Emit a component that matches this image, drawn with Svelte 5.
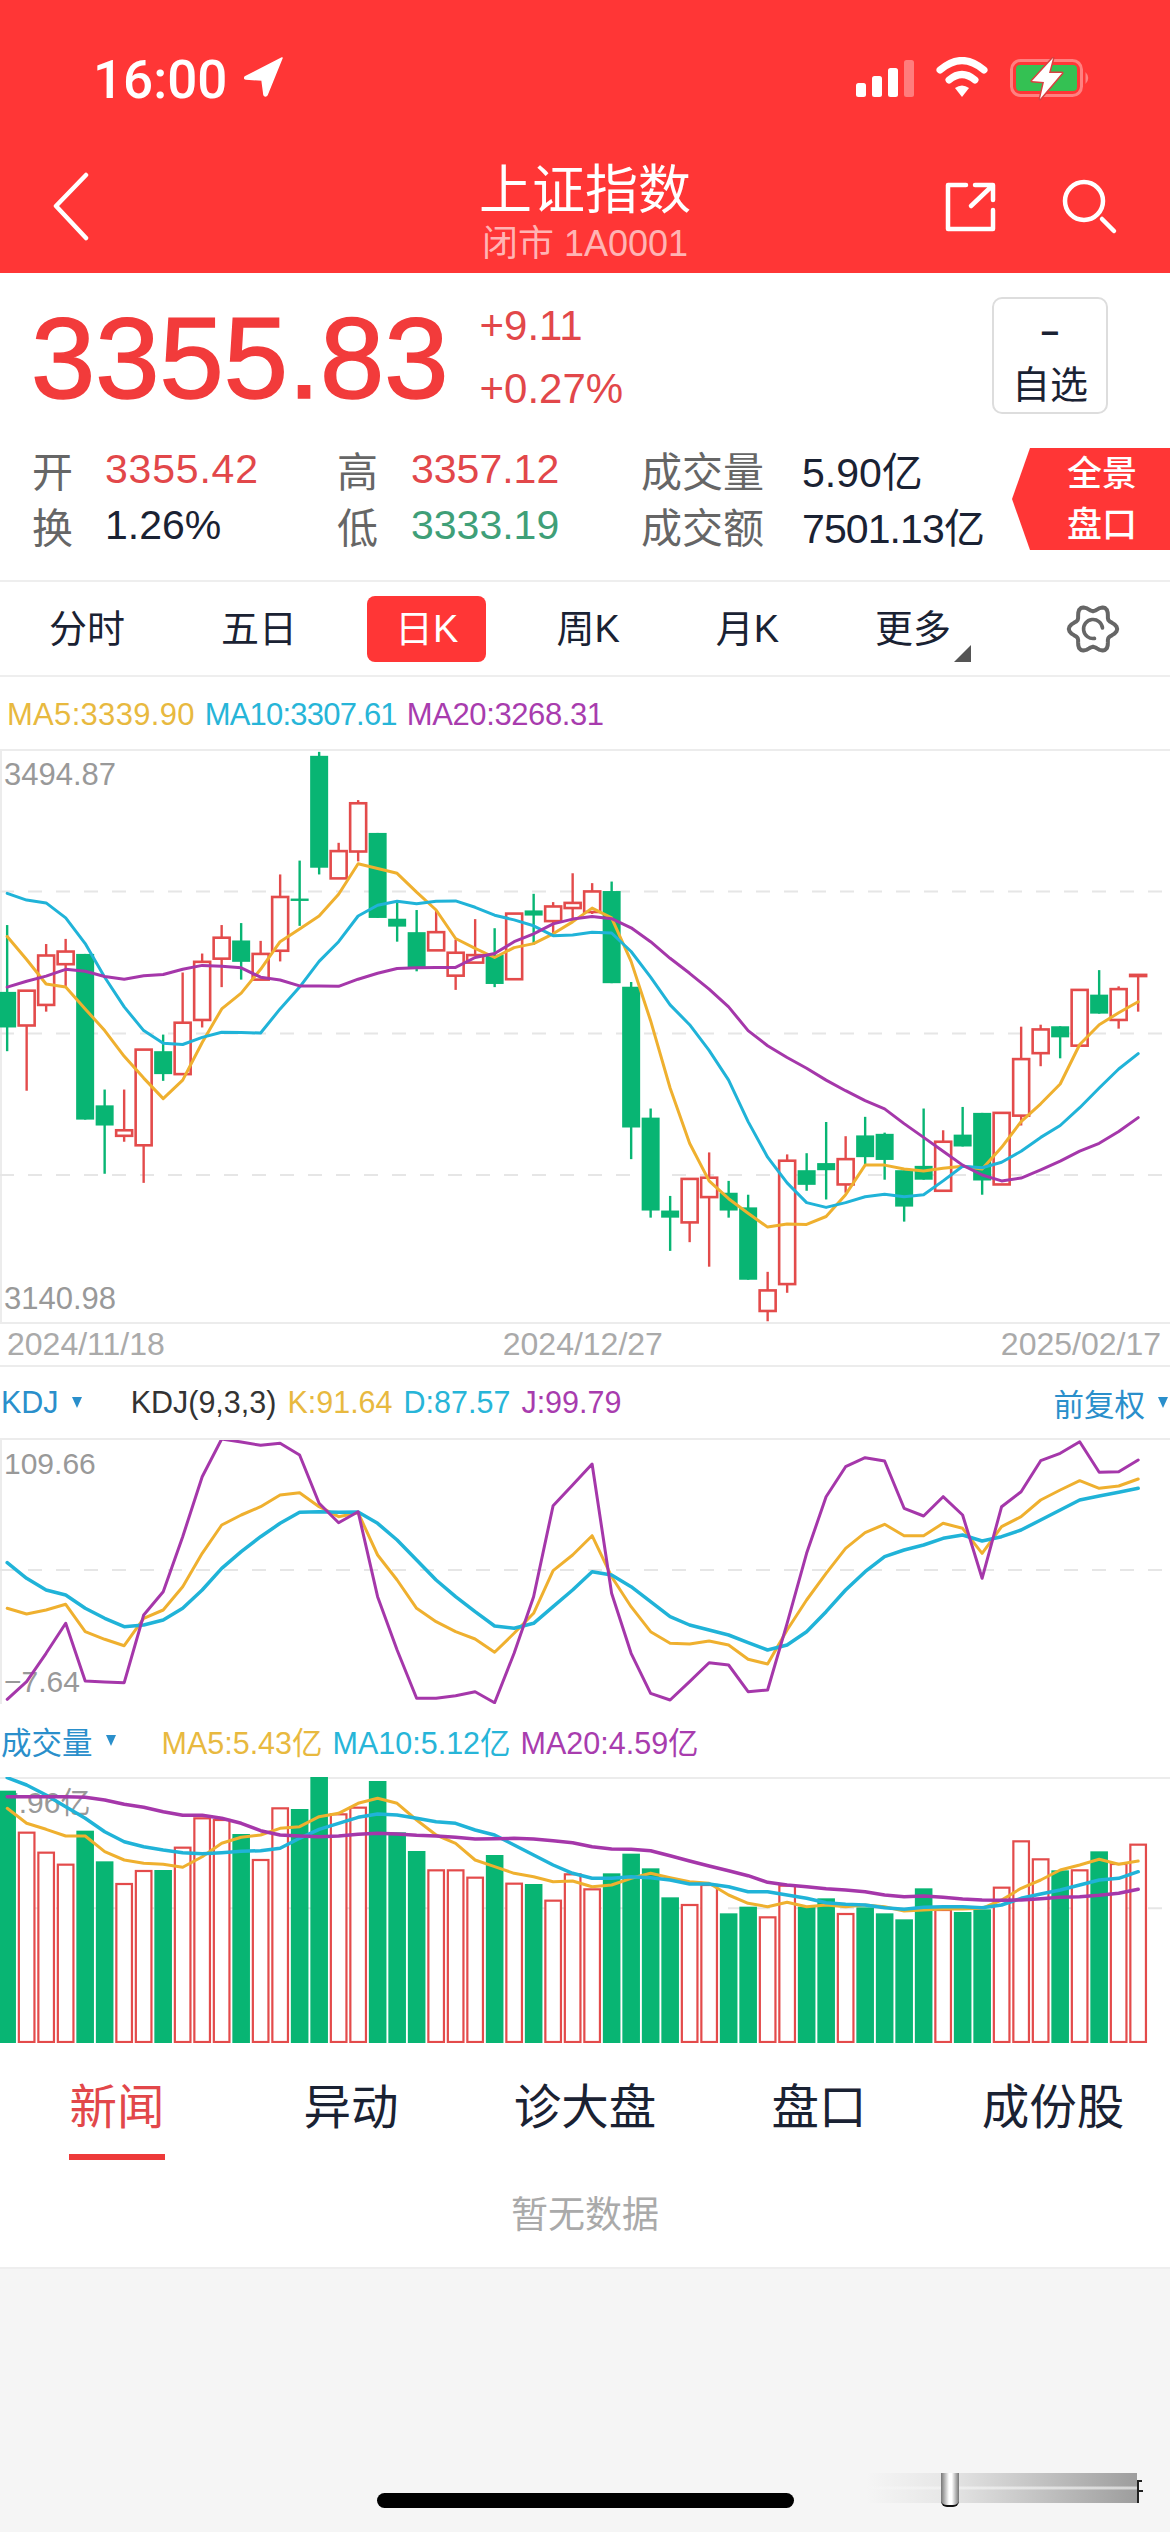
<script lang="ts">
  // values read off the chart, in crop units; converted to page pixels below
  const kx = (i: number) => 7.15 + 19.5 * i;

  // type, high, body top, body bottom, low
  const candles: [string, number, number, number, number][] = [
    ['g',468,637,727,787],['r',634,634,722,887],['r',516,545,670,687],['r',503,535,567,622],['g',541,541,960,960],
    ['g',884,924,975,1097],['r',884,987,1001,1016],['r',783,783,1025,1120],['g',745,787,845,862],['r',588,715,845,845],
    ['r',540,561,708,727],['r',468,500,553,625],['g',463,507,561,606],['r',508,541,606,606],['r',340,397,533,560],
    ['g',305,401,407,470],['g',30,40,323,340],['r',260,281,350,350],['r',152,160,282,307],['g',235,235,450,450],
    ['g',410,452,472,510],['g',430,486,577,585],['r',430,486,532,532],['r',505,538,596,632],['r',453,544,563,563],
    ['g',476,543,617,625],['r',439,439,605,605],['g',389,431,444,518],['r',410,421,458,490],['r',337,412,425,460],
    ['r',362,383,435,440],['g',358,382,615,615],['g',612,624,980,1060],['g',932,955,1190,1208],['g',1153,1190,1208,1292],
    ['r',1110,1110,1220,1270],['r',1043,1107,1156,1332],['g',1115,1145,1190,1208],['g',1150,1182,1365,1365],['r',1345,1392,1444,1470],
    ['r',1048,1064,1376,1398],['g',1045,1088,1125,1140],['g',966,1070,1088,1162],['r',1002,1060,1124,1145],['g',953,1000,1055,1075],
    ['g',993,996,1062,1112],['g',1088,1088,1180,1218],['g',932,1077,1112,1112],['r',987,1016,1140,1140],['g',928,998,1028,1028],
    ['g',943,943,1114,1150],['r',943,943,1124,1124],['r',725,807,950,975],['r',720,732,792,825],['g',724,724,752,805],
    ['r',632,632,773,773],['g',582,644,692,692],['r',623,630,708,730],['r',594,594,597,687]
  ];
  const ma5 = [497,555,617,625,680,735,800,855,907,860,765,680,640,580,510,478,445,390,313,325,337,385,430,502,527,550,525,515,490,460,425,450,560,710,880,1020,1115,1160,1197,1232,1224,1225,1205,1150,1075,1075,1085,1090,1083,1078,1085,1030,965,920,870,770,720,690,662];
  const ma10 = [388,405,412,450,515,600,675,735,767,770,752,739,740,741,680,625,560,510,445,418,408,414,408,407,423,443,455,470,495,493,486,488,535,600,670,720,785,860,965,1055,1120,1170,1182,1170,1155,1149,1155,1150,1115,1078,1082,1068,1040,1005,975,930,880,832,793];
  const ma20 = [625,610,597,580,585,598,605,596,593,580,570,572,576,600,607,622,622,623,605,590,578,576,575,575,550,540,510,490,465,453,446,452,475,510,552,590,630,675,735,773,803,830,860,887,912,933,970,1005,1040,1075,1100,1115,1108,1087,1065,1040,1020,990,955];

  const kLine = [745,762,750,733,815,838,857,775,750,680,580,495,465,440,405,398,440,470,458,585,660,745,785,815,837,877,820,760,632,585,527,650,740,815,850,852,843,855,898,912,810,720,640,565,518,493,527,527,490,505,580,500,470,420,390,362,385,378,357];
  const dLine = [608,655,690,705,745,775,800,795,780,745,690,625,575,530,490,457,455,457,456,490,540,600,660,710,755,798,805,790,740,690,635,645,680,725,770,795,810,825,848,870,855,815,755,690,635,590,570,555,535,525,543,530,510,480,450,420,408,397,385];
  const jLine = [1018,965,880,790,963,966,968,765,695,530,350,237,246,256,250,285,430,488,455,710,870,1015,1015,1007,995,1028,880,710,437,375,312,700,880,1000,1020,965,908,915,995,990,790,580,410,320,293,303,445,468,410,465,655,440,395,302,280,245,337,335,300];

  const bars: [string, number][] = [
    ['g',242],['r',368],['r',428],['r',464],['g',362],['g',454],['r',522],['r',483],['g',480],['r',413],
    ['r',325],['r',330],['g',372],['r',450],['r',295],['g',297],['g',200],['r',313],['r',293],['g',213],
    ['g',367],['g',423],['r',481],['r',481],['r',503],['g',435],['r',521],['g',522],['r',572],['r',493],
    ['r',538],['g',490],['g',431],['g',475],['g',562],['r',585],['r',525],['g',610],['g',590],['r',622],
    ['r',527],['g',590],['g',565],['r',612],['g',592],['g',610],['g',628],['g',535],['r',600],['g',606],
    ['g',598],['r',533],['r',394],['r',448],['g',481],['r',481],['g',424],['r',462],['r',404]
  ];
  const vol5 = [295,340,358,378,378,425,450,460,463,472,440,400,382,375,355,350,320,310,280,265,280,330,375,400,450,470,490,500,515,513,530,525,505,490,503,515,520,555,580,590,577,590,585,590,585,590,603,600,597,597,595,570,535,510,480,465,448,463,453];
  const vol10 = [203,225,255,290,325,365,395,410,420,428,431,428,424,422,415,385,358,340,322,312,315,325,335,340,360,375,405,435,465,490,505,505,500,503,510,522,522,530,545,545,555,565,578,583,585,593,598,592,590,590,593,585,565,552,540,525,510,505,485];
  const vol20 = [260,260,260,260,262,270,283,292,305,316,316,325,340,362,375,378,380,378,373,370,372,376,378,382,387,386,385,387,392,398,410,417,418,422,437,453,468,482,497,517,525,530,536,540,545,555,560,558,562,567,570,571,570,566,562,560,556,550,538];

  const ky = (z: number) => 740 + z / 2.529 - 751;
  const sy = (z: number) => 1360 + z / 3 - 1440;
  const vy = (z: number) => 1710 + z / 3 - 1777;
  const pts = (arr: number[], f: (z: number) => number) =>
    arr.map((z, i) => `${kx(i).toFixed(1)},${f(z).toFixed(1)}`).join(' ');

  const gear = (() => {
    let d = '';
    for (let a = 0; a < 360; a += 6) {
      const t = (a * Math.PI) / 180;
      const r = 21 + 3.2 * Math.cos(6 * t);
      d += `${a ? 'L' : 'M'}${(r * Math.cos(t)).toFixed(2)} ${(r * Math.sin(t)).toFixed(2)}`;
    }
    return d + 'Z';
  })();

  const timeTabs = ['分时', '五日', '日K', '周K', '月K', '更多'];
  const newsTabs = ['新闻', '异动', '诊大盘', '盘口', '成份股'];
</script>

<div class="page">
  <header class="head">
    <div class="status">
      <span class="time">16:00</span>
      <svg class="loc" width="42" height="42" viewBox="0 0 42 42">
        <path d="M39 2 L2 21 Q1 23 3 23 L19 24 L21 39 Q22 41 24 39 Z" fill="#fff" stroke="#fff" stroke-width="1.5" stroke-linejoin="round" />
      </svg>
      <svg class="sys" width="240" height="44" viewBox="855 56 240 44">
        <rect x="856" y="82" width="10" height="14" rx="2.5" fill="#fff" />
        <rect x="872" y="75" width="10" height="21" rx="2.5" fill="#fff" />
        <rect x="888" y="67" width="10" height="29" rx="2.5" fill="#fff" />
        <rect x="904" y="59" width="10" height="37" rx="2.5" fill="#ff7d7d" />
        <path d="M940 69 Q962 50 984 69" fill="none" stroke="#fff" stroke-width="7" stroke-linecap="round" />
        <path d="M949 79 Q962 68 975 79" fill="none" stroke="#fff" stroke-width="7" stroke-linecap="round" />
        <path d="M955 87 Q962 82 969 87 L962 96 Z" fill="#fff" />
        <rect x="1011.5" y="59.5" width="70" height="35" rx="9" fill="none" stroke="#ff8080" stroke-width="3" />
        <rect x="1016" y="64" width="61" height="26" rx="4" fill="#34c153" />
        <path d="M1085.5 71 Q1091 77 1085.500 83 Z" fill="#ff8080" />
        <path d="M1053 57 L1032 80 L1044 81 L1040 98 L1062 72 L1049 72 Z" fill="#fff" stroke="#d94040" stroke-width="3" stroke-linejoin="round" paint-order="stroke" />
      </svg>
    </div>
    <div class="nav">
      <svg class="back" width="36" height="70" viewBox="0 0 36 70">
        <path d="M33 3 L3 34 L33 66" fill="none" stroke="#fff" stroke-width="4.5" stroke-linecap="round" stroke-linejoin="round" />
      </svg>
      <div class="title">
        <div class="name">上证指数</div>
        <div class="sub">闭市 1A0001</div>
      </div>
      <svg class="tools" width="180" height="60" viewBox="940 178 180 60">
        <path d="M966 185 H948 V229 H993 V210" fill="none" stroke="#fff" stroke-width="4.500" stroke-linecap="round" stroke-linejoin="round" />
        <path d="M971 206 L992 186 M975 185 H993 V200" fill="none" stroke="#fff" stroke-width="4.500" stroke-linecap="round" stroke-linejoin="round" />
        <circle cx="1084" cy="201" r="19" fill="none" stroke="#fff" stroke-width="4.500" />
        <path d="M1102 219 L1114 231" stroke="#fff" stroke-width="4.500" stroke-linecap="round" />
      </svg>
    </div>
  </header>

  <section class="quote">
    <div class="top">
      <div class="price">3355.83</div>
      <div class="change">
        <span>+9.11</span>
        <span>+0.27%</span>
      </div>
      <div class="fav">
        <span class="dash">−</span>
        <span>自选</span>
      </div>
    </div>
    <div class="bottom">
      <div class="stats">
        <span class="lb">开</span><span class="up loose">3355.42</span>
        <span class="lb">高</span><span class="up">3357.12</span>
        <span class="lb">成交量</span><span class="val">5.90亿</span>
        <span class="lb">换</span><span class="val">1.26%</span>
        <span class="lb">低</span><span class="down">3333.19</span>
        <span class="lb">成交额</span><span class="val tight">7501.13亿</span>
      </div>
      <div class="badge"><span>全景</span><span>盘口</span></div>
    </div>
  </section>

  <nav class="periods">
    {#each timeTabs as tab, i}
      <span class="period" class:active={i === 2} class:more={i === 5}>{tab}</span>
    {/each}
    <svg class="gear" width="54" height="54" viewBox="-27 -27 54 54">
      <path d={gear} fill="none" stroke="#666" stroke-width="4" stroke-linejoin="round" />
      <path d="M9.5 -1 A9.500 9.500 0 1 0 1.500 9.400" fill="none" stroke="#666" stroke-width="3.600" stroke-linecap="round" />
    </svg>
  </nav>

  <div class="legend main-legend">
    <span class="c5">MA5:3339.90</span>
    <span class="c10">MA10:3307.61</span>
    <span class="c20">MA20:3268.31</span>
  </div>

  <div class="chart kline">
    <span class="axis" style="top:6px">3494.87</span>
    <span class="axis" style="top:530px">3140.98</span>
    <svg width="1170" height="571" viewBox="0 0 1170 571">
      {#each [ky(383), ky(742), ky(1100)] as y}
        <line x1="0" x2="1166" y1={y} y2={y} class="dash-line" />
      {/each}
      {#each candles as [type, hi, top, bottom, lo], i}
        <line x1={kx(i)} x2={kx(i)} y1={ky(hi)} y2={ky(lo)} stroke={type === 'g' ? '#08b573' : '#e34b4b'} stroke-width="2.400" />
        {#if type === 'g'}
          <rect x={kx(i) - 9} y={ky(top)} width="18" height={Math.max(ky(bottom) - ky(top), 2)} fill="#08b573" />
        {:else}
          <rect x={kx(i) - 8} y={ky(top)} width="16" height={Math.max(ky(bottom) - ky(top), 1)} fill="#fff" stroke="#e34b4b" stroke-width="2.600" />
        {/if}
      {/each}
      <polyline points={pts(ma5, ky)} class="ln y" />
      <polyline points={pts(ma10, ky)} class="ln b" />
      <polyline points={pts(ma20, ky)} class="ln p" />
    </svg>
  </div>

  <div class="dates">
    <span>2024/11/18</span>
    <span>2024/12/27</span>
    <span>2025/02/17</span>
  </div>

  <div class="legend kdj-legend">
    <span class="pick">KDJ<i class="tri"></i></span>
    <span class="dark">KDJ(9,3,3)</span>
    <span class="c5">K:91.64</span>
    <span class="c10">D:87.57</span>
    <span class="c20">J:99.79</span>
    <span class="pick right">前复权<i class="tri"></i></span>
  </div>

  <div class="chart sub-chart">
    <span class="axis small" style="top:6px">109.66</span>
    <span class="axis small" style="top:224px">−7.64</span>
    <svg width="1170" height="264" viewBox="0 0 1170 264">
      <line x1="0" x2="1170" y1={sy(630)} y2={sy(630)} class="dash-line" />
      <polyline points={pts(kLine, sy)} class="ln y" />
      <polyline points={pts(dLine, sy)} class="ln b thick" />
      <polyline points={pts(jLine, sy)} class="ln p" />
    </svg>
  </div>

  <div class="legend vol-legend">
    <span class="pick">成交量<i class="tri"></i></span>
    <span class="c5">MA5:5.43亿</span>
    <span class="c10">MA10:5.12亿</span>
    <span class="c20">MA20:4.59亿</span>
  </div>

  <div class="chart vol">
    <span class="axis small" style="top:6px">7.96亿</span>
    <svg width="1170" height="266" viewBox="0 0 1170 266">
      <line x1="0" x2="1170" y1={vy(595)} y2={vy(595)} class="dash-line" />
      {#each bars as [type, top], i}
        {#if type === 'g'}
          <rect x={kx(i) - 8.800} y={vy(top)} width="17.600" height={266 - vy(top)} fill="#08b573" />
        {:else}
          <rect x={kx(i) - 7.800} y={vy(top)} width="15.600" height={265 - vy(top)} fill="#fff" stroke="#e34b4b" stroke-width="2.200" />
        {/if}
      {/each}
      <polyline points={pts(vol5, vy)} class="ln y" />
      <polyline points={pts(vol10, vy)} class="ln b thick" />
      <polyline points={pts(vol20, vy)} class="ln p thick" />
    </svg>
  </div>

  <div class="news-tabs">
    {#each newsTabs as tab, i}
      <span class="news-tab" class:on={i === 0}>{tab}</span>
    {/each}
  </div>
  <div class="empty">暂无数据</div>

  <div class="foot">
    <div class="smear"><i class="tick"></i></div>
    <div class="streak"></div>
    <div class="home"></div>
  </div>
</div>

<style>
  :global(body) {
    margin: 0;
    background: #fff;
  }

  .page {
    width: 1170px;
    height: 2532px;
    overflow: hidden;
    font-family: "Liberation Sans", "Noto Sans CJK SC", sans-serif;
    color: #1a2233;
  }

  .head {
    height: 273px;
    background: #ff3636;
    color: #fff;
  }

  .status {
    height: 120px;
    display: flex;
    align-items: flex-end;
    padding: 0 0 20px 93px;
    box-sizing: border-box;
    position: relative;
  }

  .time {
    font-family: Roboto, sans-serif;
    font-weight: 500;
    font-size: 53px;
    line-height: 44px;
    transform: translateY(2px);
  }

  .loc {
    margin: 0 0 2px 16px;
  }

  .sys {
    margin-left: auto;
    margin-right: 75px;
    margin-bottom: -1px;
  }

  .nav {
    height: 153px;
    display: flex;
    align-items: flex-start;
    padding-left: 53px;
    position: relative;
  }

  .back {
    margin-top: 52px;
  }

  .title {
    position: absolute;
    left: 0;
    right: 0;
    top: 39px;
    text-align: center;
  }

  .name {
    font-size: 53px;
    line-height: 64px;
  }

  .sub {
    font-size: 36px;
    line-height: 50px;
    color: #ffb4b4;
    margin-top: -4px;
  }

  .tools {
    margin-left: auto;
    margin-right: 50px;
    margin-top: 58px;
  }

  .quote {
    height: 309px;
    border-bottom: 2px solid #eee;
    box-sizing: border-box;
  }

  .top {
    display: flex;
    align-items: flex-start;
    padding: 24px 62px 0 31px;
    height: 151px;
    box-sizing: border-box;
  }

  .price {
    font-size: 115.500px;
    line-height: 120px;
    color: #f23b3b;
    margin-top: 1px;
    -webkit-text-stroke: 1.6px #f23b3b;
  }

  .change {
    display: flex;
    flex-direction: column;
    gap: 23px;
    margin-left: 31px;
    margin-top: 9px;
    font-size: 42px;
    line-height: 40px;
    color: #e2474a;
  }

  .fav {
    margin-left: auto;
    width: 116px;
    height: 117px;
    box-sizing: border-box;
    border: 2px solid #ddd;
    border-radius: 10px;
    display: flex;
    flex-direction: column;
    align-items: center;
    font-size: 38px;
    line-height: 44px;
    color: #1a2233;
  }

  .dash {
    margin-top: 16px;
    font-weight: 700;
    font-size: 32px;
    line-height: 36px;
    margin-bottom: 12px;
  }

  .bottom {
    display: flex;
    align-items: center;
    padding-left: 32px;
    margin-top: 24px;
    height: 102px;
  }

  .stats {
    flex: 1;
    margin-top: -4px;
    display: grid;
    grid-template-columns: 73px 232px 74px 230px 161px 1fr;
    grid-auto-rows: 56px;
    align-items: center;
    font-size: 41px;
  }

  .lb {
    color: #666;
    font-size: 41px;
  }

  .up {
    color: #e2474a;
  }

  .down {
    color: #3f9f78;
  }

  .val {
    color: #1a2233;
  }

  .loose {
    letter-spacing: 0.8px;
  }

  .tight {
    letter-spacing: -0.9px;
  }

  .badge {
    width: 158px;
    height: 102px;
    background: #ff3636;
    clip-path: polygon(18px 0, 100% 0, 100% 100%, 18px 100%, 0 50%);
    color: #fff;
    display: flex;
    flex-direction: column;
    align-items: center;
    justify-content: center;
    font-size: 35px;
    font-weight: 500;
    line-height: 51px;
    padding-left: 22px;
    box-sizing: border-box;
  }

  .periods {
    height: 95px;
    box-sizing: border-box;
    border-bottom: 2px solid #eee;
    display: flex;
    align-items: center;
    gap: 96px;
    padding: 0 50px 0 49px;
    font-size: 38px;
  }

  .period {
    line-height: 66px;
    position: relative;
  }

  .active {
    background: #ff3636;
    color: #fff;
    border-radius: 8px;
    padding: 0 28px;
    margin: 0 -26px;
  }

  .more::after {
    content: "";
    position: absolute;
    right: -20px;
    bottom: 0;
    border-left: 17px solid transparent;
    border-bottom: 17px solid #555;
  }

  .gear {
    margin-left: auto;
  }

  .legend {
    display: flex;
    align-items: center;
    font-size: 31px;
    box-sizing: border-box;
  }

  .main-legend {
    height: 72px;
    padding: 3px 0 0 7px;
    gap: 10px;
  }

  .main-legend .c5 {
    letter-spacing: 0.3px;
  }

  .main-legend .c10 {
    letter-spacing: -0.8px;
  }

  .main-legend .c20 {
    letter-spacing: -0.4px;
  }

  .c5 {
    color: #e8b93f;
  }

  .c10 {
    color: #27b5d8;
  }

  .c20 {
    color: #a83cae;
  }

  .chart {
    position: relative;
    border-top: 2px solid #ececec;
    border-bottom: 2px solid #ececec;
    border-left: 2px solid #ececec;
    width: 1170px;
    box-sizing: border-box;
  }

  .chart svg {
    display: block;
    position: relative;
    margin-left: -2px;
  }

  .axis {
    position: absolute;
    left: 2px;
    font-size: 31px;
    line-height: 36px;
    color: #999;
  }

  .axis.small {
    font-size: 30px;
  }

  .dash-line {
    stroke: #e6e6e6;
    stroke-width: 2;
    stroke-dasharray: 14 14;
  }

  .ln {
    fill: none;
    stroke-width: 3;
    stroke-linejoin: round;
    stroke-linecap: round;
  }

  .ln.y {
    stroke: #efb02f;
  }

  .ln.b {
    stroke: #20b3d8;
  }

  .ln.p {
    stroke: #a537aa;
  }

  .ln.thick {
    stroke-width: 3.500;
  }

  .dates {
    height: 43px;
    display: flex;
    justify-content: space-between;
    align-items: center;
    padding: 0 9px 0 7px;
    border-bottom: 2px solid #ececec;
    box-sizing: border-box;
    font-size: 32px;
    color: #aaa;
    width: 1170px;
  }

  .kdj-legend {
    height: 71px;
    font-size: 30.500px;
    gap: 11px;
    padding: 0 2px 0 1px;
  }

  .pick {
    color: #2a8fcb;
    display: flex;
    align-items: center;
  }

  .tri {
    display: inline-block;
    margin-left: 13px;
    border-left: 5px solid transparent;
    border-right: 5px solid transparent;
    border-top: 11px solid #2a8fcb;
  }

  .kdj-legend .pick:first-child {
    margin-right: 38px;
  }

  .dark {
    color: #333;
  }

  .right {
    margin-left: auto;
  }

  .vol-legend {
    height: 73px;
    font-size: 30.500px;
    gap: 10px;
    padding-left: 1px;
  }

  .vol-legend .pick {
    margin-right: 36px;
  }

  .sub-chart {
    height: 266px;
    border-bottom-width: 0;
  }

  .vol {
    height: 266px;
    border-bottom: 0;
    border-left: 0;
  }

  .vol svg {
    margin-left: 0;
    margin-top: -2px;
  }

  .news-tabs {
    display: grid;
    grid-template-columns: repeat(5, 234px);
    padding-top: 39px;
    font-size: 47.500px;
    line-height: 52px;
    text-align: center;
    height: 117px;
    box-sizing: border-box;
  }

  .news-tab {
    position: relative;
  }

  .on {
    color: #e2474a;
  }

  .on::after {
    content: "";
    position: absolute;
    left: 69px;
    width: 96px;
    top: 72px;
    height: 6px;
    background: #ee3a3a;
  }

  .empty {
    height: 109px;
    box-sizing: border-box;
    padding-top: 34px;
    text-align: center;
    font-size: 37px;
    line-height: 44px;
    color: #aaa;
    border-bottom: 2px solid #eee;
  }

  .foot {
    height: 263px;
    background: #f5f5f5;
    position: relative;
  }

  .home {
    position: absolute;
    left: 377px;
    top: 224px;
    width: 417px;
    height: 15px;
    border-radius: 8px;
    background: #000;
  }

  .smear {
    position: absolute;
    left: 866px;
    top: 204px;
    width: 271px;
    height: 30px;
    background:
      linear-gradient(to bottom, rgba(245,245,245,0) 42%, rgba(245,245,245,.8) 50%, rgba(245,245,245,0) 58%),
      linear-gradient(to right, rgba(170,170,170,0), rgba(170,170,170,.2) 30%, rgba(120,120,120,.7) 100%);
  }

  .tick {
    position: absolute;
    left: 100%;
    top: 7px;
    width: 5px;
    height: 23px;
    border-left: 2px solid #222;
    border-top: 2px solid #222;
    box-sizing: border-box;
  }

  .tick::after {
    content: "";
    position: absolute;
    left: 0;
    top: 8px;
    width: 4px;
    height: 2px;
    background: #222;
  }

  .streak {
    position: absolute;
    left: 941px;
    top: 204px;
    width: 18px;
    height: 32px;
    background: linear-gradient(to right, #777, #fff 45%, #fff 60%, #777);
    border-bottom: 2px solid #111;
    border-radius: 0 0 6px 6px;
  }
</style>
